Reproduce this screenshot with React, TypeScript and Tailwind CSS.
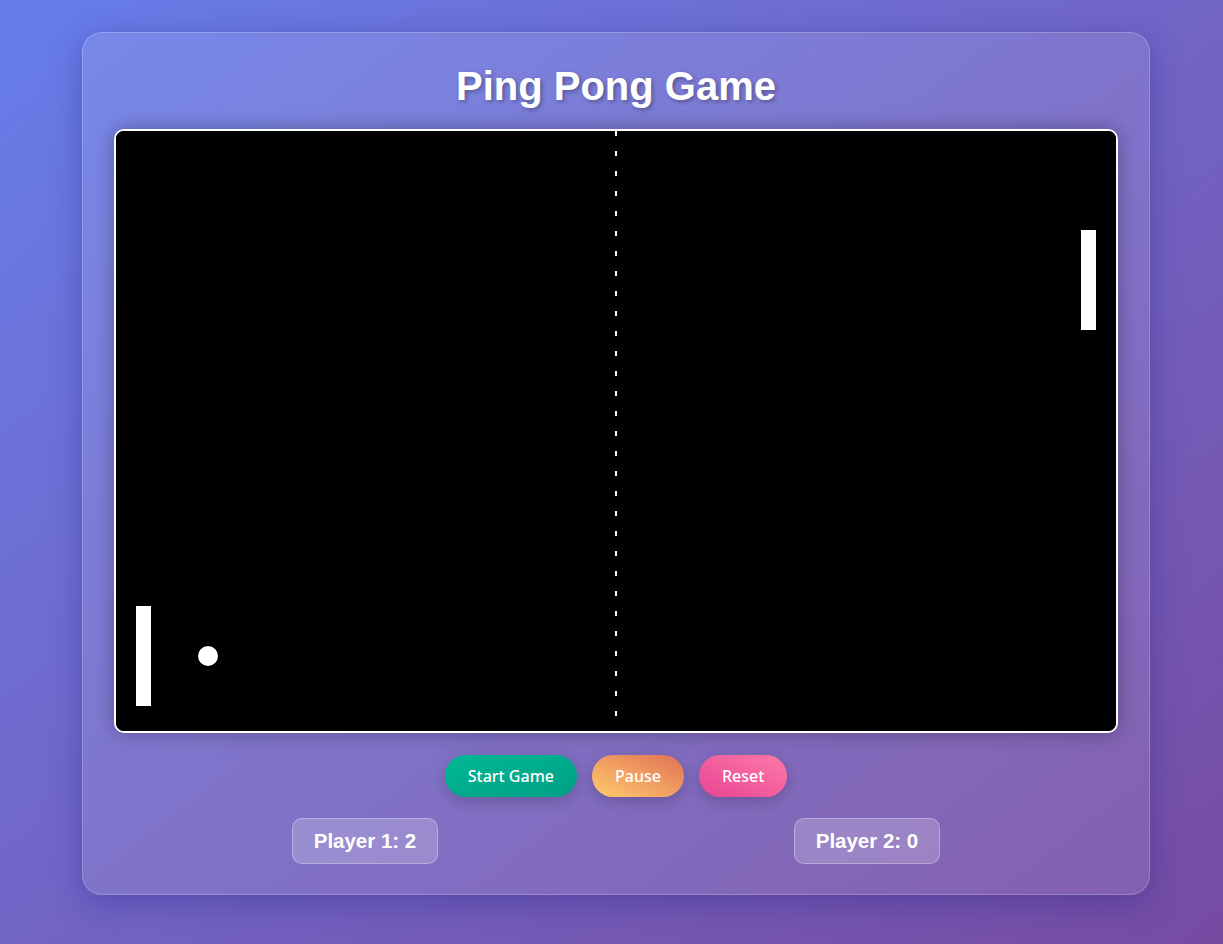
import React from "react";

const Court = () => {
  return (
    <svg width="1000" height="600" viewBox="0 0 1000 600" className="block">
      <rect x="0" y="0" width="1000" height="600" fill="#000" />
      <line x1="500" y1="0" x2="500" y2="600" stroke="#fff" strokeWidth="2" strokeDasharray="5 15" />
      <rect x="20" y="475" width="15" height="100" fill="#fff" />
      <rect x="965" y="99" width="15" height="100" fill="#fff" />
      <circle cx="92" cy="525" r="10" fill="#fff" />
    </svg>
  );
};

const buttons = [
  { label: "Start Game", cls: "bg-gradient-to-br from-[#00b894] to-[#00a085]" },
  { label: "Pause", cls: "bg-gradient-to-tr from-[#fdcb6e] to-[#e17055]" },
  { label: "Reset", cls: "bg-gradient-to-tr from-[#e84393] to-[#fd79a8]" },
];

export default function App() {
  return (
    <div className="min-h-[944px] w-full bg-gradient-to-br from-[#667eea] to-[#764ba2] pt-[32px] pl-[82px] font-['Liberation_Sans',Arial,sans-serif]">
      <div className="w-[1068px] rounded-[20px] border border-white/20 bg-white/10 px-[31px] pt-[30px] pb-[30px] shadow-[0_8px_32px_rgba(31,38,135,0.37)]">
        <h1 className="mb-[20px] text-center text-[40px] leading-[46px] font-bold text-white [text-shadow:2px_2px_4px_rgba(0,0,0,0.3)]">
          Ping Pong Game
        </h1>

        <div className="overflow-hidden rounded-[10px] border-2 border-white bg-black shadow-[0_0_20px_rgba(0,0,0,0.3)]">
          <Court />
        </div>

        <div className="mt-[22px] flex justify-center gap-[15px] font-['Noto_Sans','Open_Sans',sans-serif]">
          {buttons.map((b) => (
            <button
              key={b.label}
              className={`h-[42px] rounded-[25px] px-[23px] text-[16px] font-medium text-white shadow-[0_4px_15px_rgba(0,0,0,0.2)] ${b.cls}`}
            >
              {b.label}
            </button>
          ))}
        </div>

        <div className="mt-[21px] flex justify-around">
          <div className="rounded-[10px] border border-white/30 bg-white/20 px-[21px] py-[10px] text-[20.5px] leading-[24px] font-bold text-white">
            Player 1: 2
          </div>
          <div className="rounded-[10px] border border-white/30 bg-white/20 px-[21px] py-[10px] text-[20.5px] leading-[24px] font-bold text-white">
            Player 2: 0
          </div>
        </div>
      </div>
    </div>
  );
}
